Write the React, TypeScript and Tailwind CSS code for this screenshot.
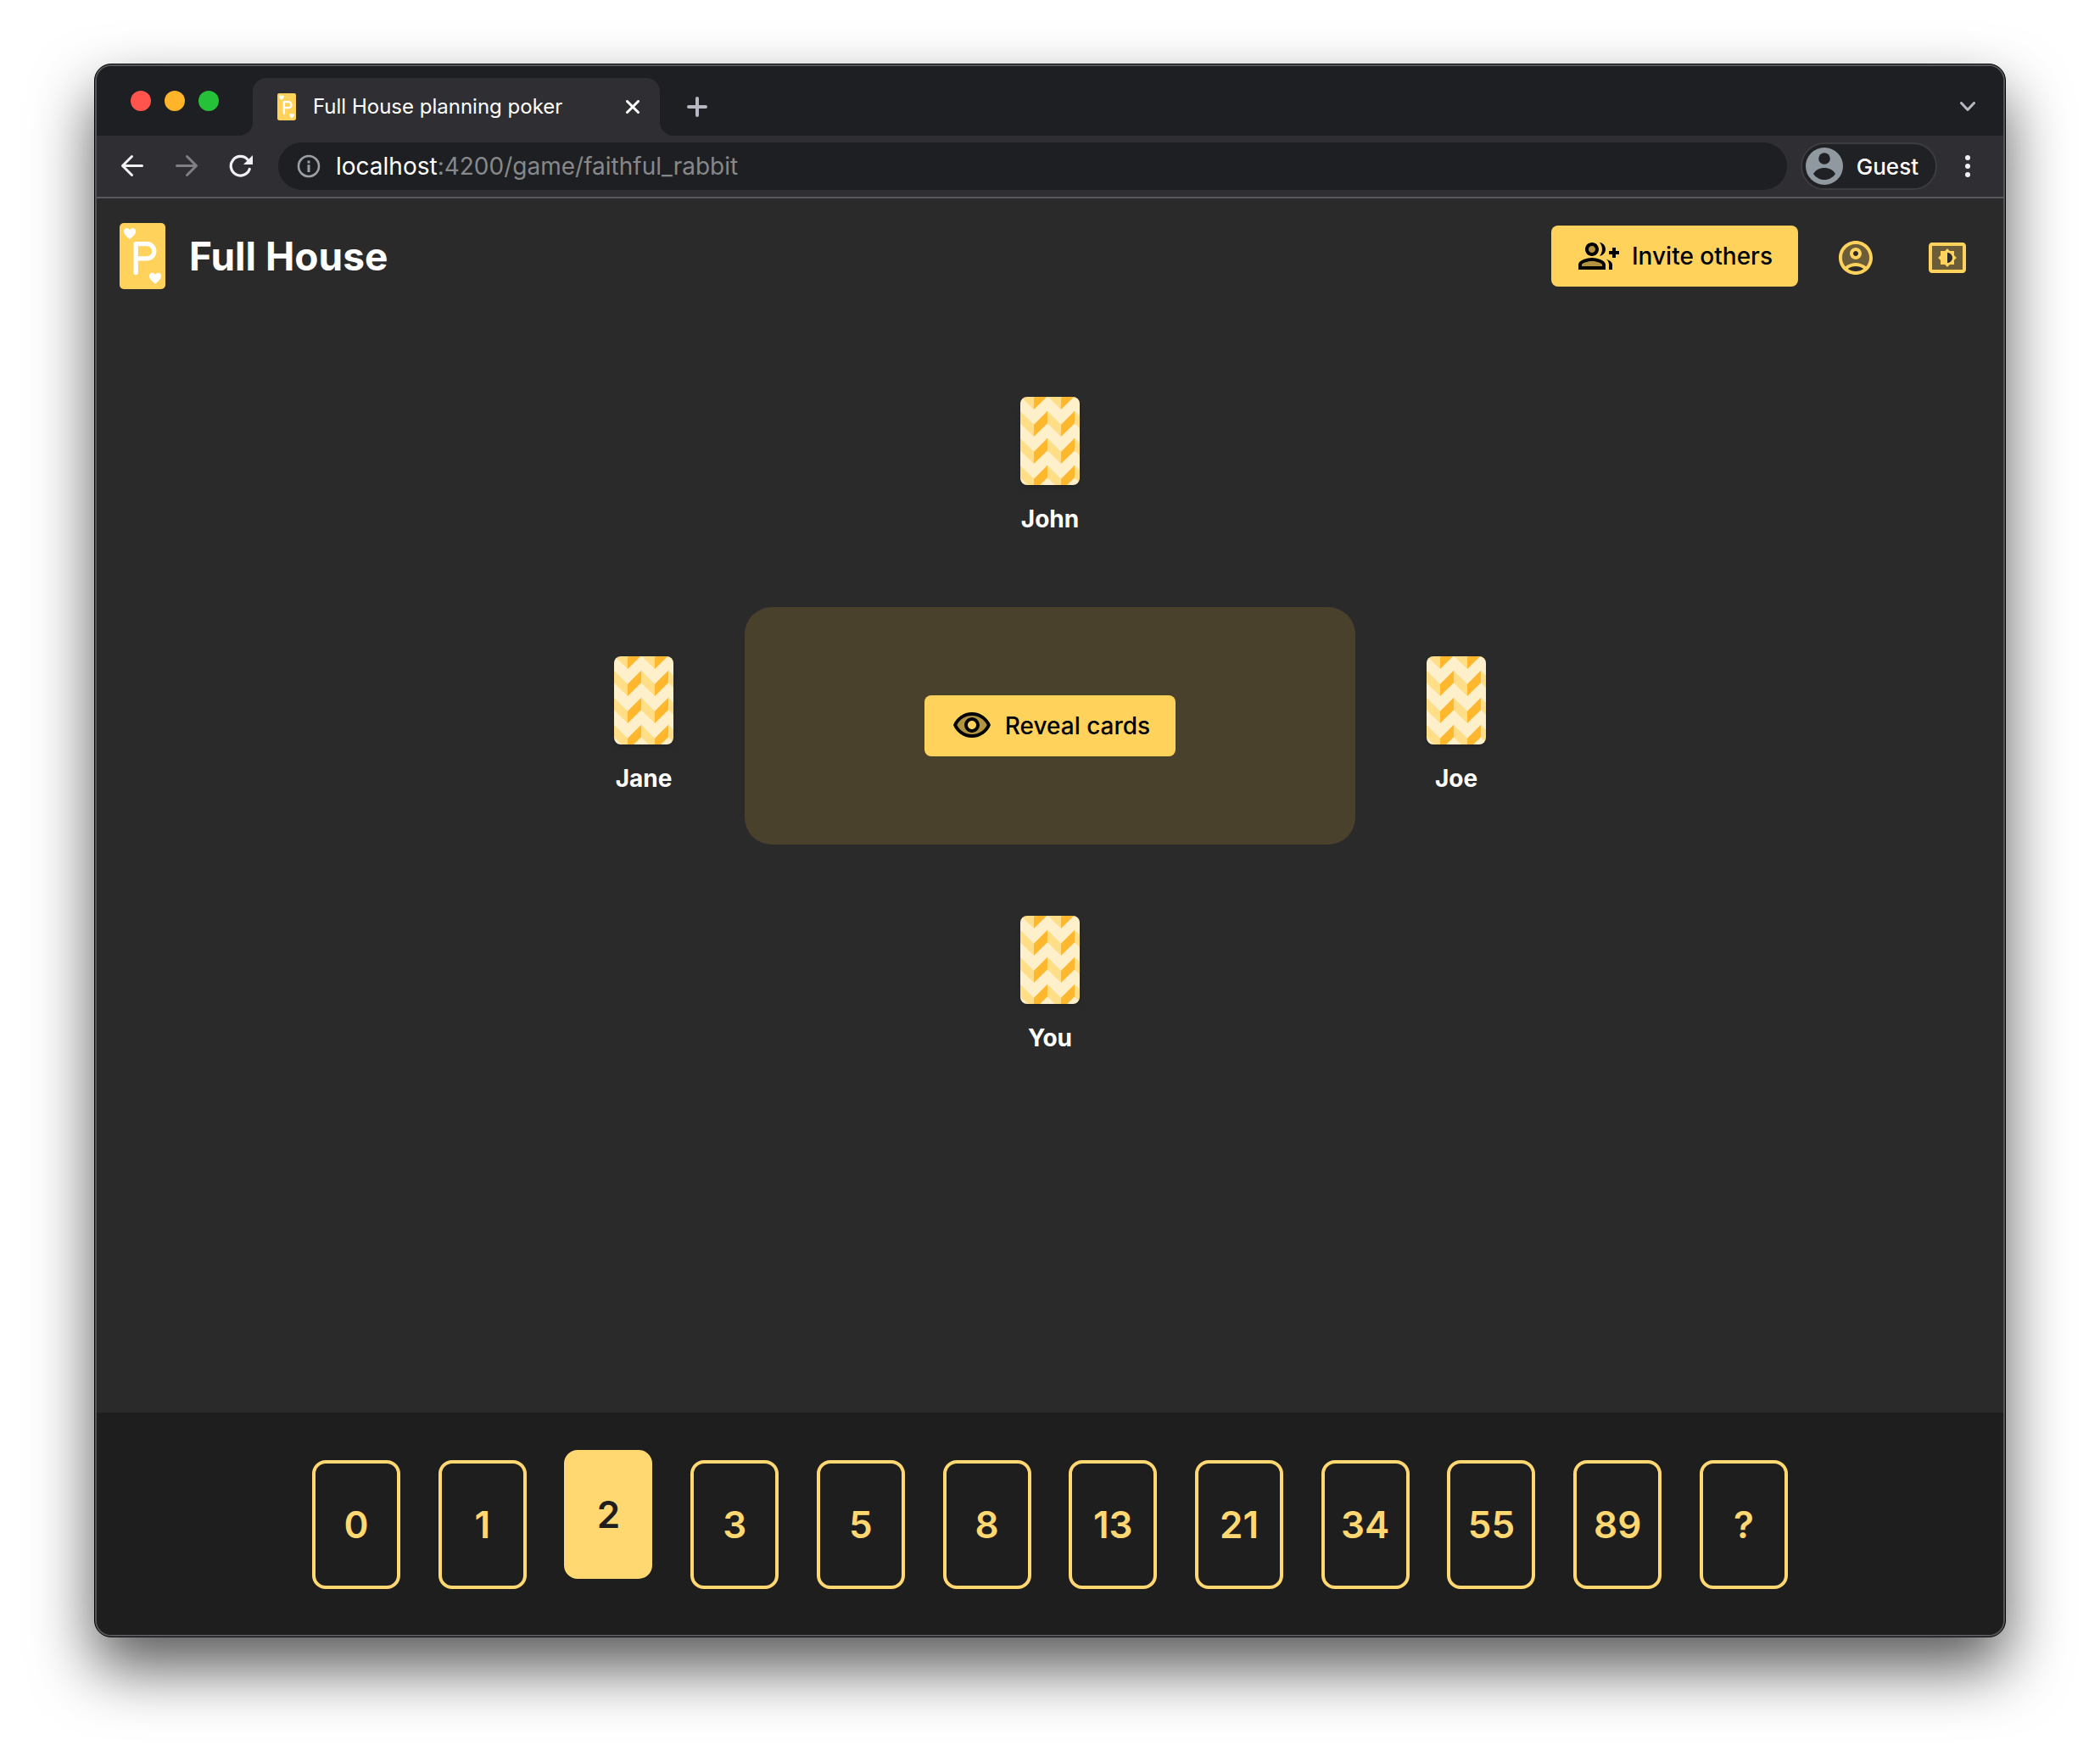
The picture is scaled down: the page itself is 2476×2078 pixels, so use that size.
import { useId, useState } from 'react';
import type { ReactNode } from 'react';

const CARD_VALUES = ['0', '1', '2', '3', '5', '8', '13', '21', '34', '55', '89', '?'];

function Heart({ x, y }: { x: number; y: number }) {
  return (
    <path
      transform={`translate(${x} ${y})`}
      d="M7 13.300C5.300 10.800 0 8.300 0 4 0 1.600 1.600 0 3.600 0 5.200 0 6.400 .9 7 2.400 7.600 .9 8.800 0 10.400 0 12.400 0 14 1.600 14 4c0 4.300-5.300 6.800-7 9.300z"
      fill="#fff"
    />
  );
}

function Logo({ className }: { className: string }) {
  return (
    <svg viewBox="0 0 54 78" className={className} aria-hidden="true">
      <rect width="54" height="78" rx="5" fill="#ffd35b" />
      <Heart x={5} y={6} />
      <Heart x={35} y={58.700} />
      <path d="M19.200 58.500V24.600h13a8.600 8.600 0 0 1 0 17.200h-13" fill="none" stroke="#fff" strokeWidth="5.300" strokeLinecap="round" strokeLinejoin="round" />
    </svg>
  );
}

function CardBack() {
  const patternId = useId();
  return (
    <svg viewBox="0 0 70 104" className="h-[104px] w-[70px] rounded-lg shadow-md" aria-hidden="true">
      <defs>
        <pattern id={patternId} width="32" height="32" y="16" patternUnits="userSpaceOnUse">
          <rect width="32" height="32" fill="#fff0cc" />
          <path d="M0 .7l16 16V31L0 15.300z" fill="#ffde87" />
          <path d="M32 .7l-16 16V31l16-15.700z" fill="#ffb72e" />
        </pattern>
      </defs>
      <rect width="70" height="104" fill={`url(#${patternId})`} />
    </svg>
  );
}

function Player({ name }: { name: string }) {
  return (
    <figure className="flex w-[70px] flex-col items-center gap-5">
      <CardBack />
      <figcaption className="text-[28px] leading-10 font-bold whitespace-nowrap">{name}</figcaption>
    </figure>
  );
}

function ActionButton({ icon, children }: { icon: ReactNode; children: ReactNode }) {
  return (
    <button type="button" className="flex h-[72px] items-center gap-[15px] rounded-lg bg-[#ffd35b] pr-[30px] pl-8 text-[28px] font-medium text-black">
      <svg viewBox="0 0 24 24" className="size-12" fill="currentColor" aria-hidden="true">
        {icon}
      </svg>
      {children}
    </button>
  );
}

function IconButton({ label, children }: { label: string; children: ReactNode }) {
  return (
    <button type="button" aria-label={label} className="flex size-20 items-center justify-center rounded-full text-[#ffd35b]">
      <svg viewBox="0 0 24 24" className="size-12" fill="currentColor" aria-hidden="true">
        {children}
      </svg>
    </button>
  );
}

function TabStrip() {
  return (
    <div className="flex h-[82px] items-end bg-[#1e1f22] pr-[30px] pl-10">
      <div className="flex h-full w-[144px] items-center gap-4">
        <button type="button" aria-label="Close window" className="size-6 rounded-full bg-[#ff544d]" />
        <button type="button" aria-label="Minimise window" className="size-6 rounded-full bg-[#ffb429]" />
        <button type="button" aria-label="Zoom window" className="size-6 rounded-full bg-[#25c138]" />
      </div>
      <div className="relative flex h-[68px] w-[480px] items-center rounded-t-2xl bg-[#2f2e33] pr-5 pl-[29px]">
        <svg viewBox="0 0 16 16" className="absolute bottom-0 -left-4 size-4" fill="#2f2e33" aria-hidden="true">
          <path d="M16 0v16H0A16 16 0 0 0 16 0z" />
        </svg>
        <Logo className="h-8 w-[22px]" />
        <span className="ml-5 grow text-[24px] text-white">Full House planning poker</span>
        <button type="button" aria-label="Close tab" className="flex size-6 items-center justify-center">
          <svg viewBox="0 0 16 16" className="size-4" stroke="#fff" strokeWidth="3" strokeLinecap="round" aria-hidden="true">
            <path d="M1.500 1.500l13 13M14.500 1.500l-13 13" />
          </svg>
        </button>
        <svg viewBox="0 0 16 16" className="absolute -right-4 bottom-0 size-4" fill="#2f2e33" aria-hidden="true">
          <path d="M0 0v16h16A16 16 0 0 1 0 0z" />
        </svg>
      </div>
      <button type="button" aria-label="New tab" className="ml-8 flex h-[68px] w-6 items-center justify-center">
        <svg viewBox="0 0 24 24" className="size-6" stroke="#b7b8c1" strokeWidth="4" strokeLinecap="round" aria-hidden="true">
          <path d="M12 2v20M2 12h20" />
        </svg>
      </button>
      <button type="button" aria-label="Search tabs" className="ml-auto flex h-[68px] w-6 items-center justify-center">
        <svg viewBox="0 0 18 12" className="h-3 w-[18px]" fill="none" stroke="#b7b8c1" strokeWidth="3" strokeLinecap="round" strokeLinejoin="round" aria-hidden="true">
          <path d="M1.500 1.500L9 9.500l7.500-8" />
        </svg>
      </button>
    </div>
  );
}

function Toolbar() {
  return (
    <div className="flex h-[74px] items-center border-b-2 border-[#57585b] bg-[#2f2e33] pr-[30px] pl-7">
      <div className="flex items-center gap-9">
        <button type="button" aria-label="Back" className="size-7">
          <svg viewBox="0 0 28 28" className="size-7" fill="none" stroke="#f1f1f3" strokeWidth="3" strokeLinecap="round" strokeLinejoin="round" aria-hidden="true">
            <path d="M13.500 2.500L2.500 13.500l11 11M2.500 13.500H25.500" />
          </svg>
        </button>
        <button type="button" aria-label="Forward" className="size-7">
          <svg viewBox="0 0 28 28" className="size-7" fill="none" stroke="#808083" strokeWidth="3" strokeLinecap="round" strokeLinejoin="round" aria-hidden="true">
            <path d="M14.500 2.500l11 11-11 11M25.500 13.500H2.500" />
          </svg>
        </button>
        <button type="button" aria-label="Reload" className="size-7">
          <svg viewBox="0 0 28 28" className="size-7" aria-hidden="true">
            <path d="M24.200 17.500A11.300 11.300 0 1 1 22 6.200" fill="none" stroke="#f1f1f3" strokeWidth="3.200" strokeLinecap="round" />
            <path d="M28 1v11H17z" fill="#f1f1f3" />
          </svg>
        </button>
      </div>
      <div className="ml-[30px] flex h-14 grow items-center gap-[18px] rounded-full bg-[#1e1f22] pl-[22px] text-[28px]">
        <svg viewBox="0 0 28 28" className="size-7" aria-hidden="true">
          <circle cx="14" cy="14" r="12" fill="none" stroke="#9aa0a6" strokeWidth="2.600" />
          <path d="M12.500 12.300h3V21h-3zM12.500 7.500h3v3h-3z" fill="#9aa0a6" />
        </svg>
        <a href="#game" className="text-[#87888a]">
          <span className="text-white">localhost</span>:4200/game/faithful_rabbit
        </a>
      </div>
      <button type="button" className="ml-4 flex h-14 items-center gap-4 rounded-full border-2 border-[#3c3c3e] bg-[#202124] pr-5 pl-1 text-[26px] font-medium text-white">
        <svg viewBox="0 0 44 44" className="size-11" aria-hidden="true">
          <circle cx="22" cy="22" r="22" fill="#9099a0" />
          <circle cx="22" cy="13" r="6.800" fill="#202124" />
          <path d="M9 31c2.500-4.500 7.500-7 13-7s10.500 2.500 13 7c-2.800 4.300-7.500 7-13 7s-10.200-2.700-13-7z" fill="#202124" />
        </svg>
        Guest
      </button>
      <button type="button" aria-label="Browser menu" className="ml-6 flex h-14 w-6 items-center justify-center">
        <svg viewBox="0 0 6 28" className="h-7 w-[6px]" fill="#f1f1f3" aria-hidden="true">
          <circle cx="3" cy="4" r="3" />
          <circle cx="3" cy="14" r="3" />
          <circle cx="3" cy="24" r="3" />
        </svg>
      </button>
    </div>
  );
}

function Header() {
  return (
    <header className="flex h-[136px] items-center gap-7 pr-[26px] pl-[27px]">
      <Logo className="h-[78px] w-[54px]" />
      <h1 className="grow text-[46px] font-bold">Full House</h1>
      <ActionButton
        icon={
          <>
            <path opacity=".3" d="M8 15c-2.700 0-5.800 1.290-6 2.010V18h12v-1c-.2-.71-3.300-2-6-2z" />
            <circle opacity=".3" cx="8" cy="8" r="2" />
            <path d="M22 9V7h-2v2h-2v2h2v2h2v-2h2V9h-2zM8 12c2.210 0 4-1.790 4-4s-1.790-4-4-4-4 1.790-4 4 1.790 4 4 4zm0-6c1.100 0 2 .9 2 2s-.9 2-2 2-2-.9-2-2 .9-2 2-2zm0 7c-2.670 0-8 1.340-8 4v3h16v-3c0-2.660-5.330-4-8-4zm6 5H2v-.99C2.200 16.290 5.300 15 8 15s5.800 1.290 6 2v1zM12.510 4.050C13.430 5.110 14 6.490 14 8s-.57 2.890-1.490 3.950C14.470 11.700 16 10.040 16 8s-1.530-3.700-3.490-3.950zM16.530 13.830C17.420 14.660 18 15.700 18 17v3h2v-3c0-1.450-1.590-2.510-3.470-3.170z" />
          </>
        }
      >
        Invite others
      </ActionButton>
      <nav className="flex gap-7 pt-1">
        <IconButton label="Profile">
          <path opacity=".3" d="M12 4c-4.420 0-8 3.580-8 8 0 1.950.7 3.730 1.860 5.120C7.550 15.800 9.680 15 12 15s4.450.8 6.140 2.120C19.300 15.730 20 13.950 20 12c0-4.420-3.580-8-8-8zm0 9c-1.930 0-3.500-1.570-3.500-3.500S10.070 6 12 6s3.500 1.570 3.500 3.500S13.930 13 12 13z" />
          <path d="M12 2C6.480 2 2 6.480 2 12s4.480 10 10 10 10-4.480 10-10S17.520 2 12 2zM7.350 18.500C8.660 17.560 10.260 17 12 17s3.340.56 4.650 1.500C15.340 19.440 13.740 20 12 20s-3.340-.56-4.650-1.500zm10.790-1.380C16.450 15.800 14.320 15 12 15s-4.450.8-6.140 2.120C4.700 15.730 4 13.950 4 12c0-4.420 3.580-8 8-8s8 3.580 8 8c0 1.950-.7 3.730-1.860 5.120z" />
          <path d="M12 6c-1.930 0-3.500 1.570-3.500 3.500S10.070 13 12 13s3.500-1.570 3.500-3.500S13.930 6 12 6zm0 5c-.83 0-1.500-.67-1.500-1.500S11.170 8 12 8s1.500.67 1.500 1.500S12.830 11 12 11z" />
        </IconButton>
        <IconButton label="Theme">
          <path opacity=".3" fillRule="evenodd" d="M3 19.010h18V4.990H3v14.020zM8 10.500V8h2.500L12 6.500 13.500 8H16v2.500l1.500 1.500-1.500 1.500V16h-2.500L12 17.500 10.500 16H8v-2.500L6.500 12 8 10.500z" />
          <path d="M21 3H3c-1.100 0-2 .9-2 2v14c0 1.100.9 2 2 2h18c1.100 0 2-.9 2-2V5c0-1.100-.9-2-2-2zm0 16.010H3V4.990h18v14.020zM8 16h2.500l1.500 1.500 1.500-1.500H16v-2.500l1.500-1.500-1.500-1.500V8h-2.500L12 6.500 10.500 8H8v2.500L6.500 12 8 13.500V16zm4-7c1.660 0 3 1.340 3 3s-1.340 3-3 3V9z" />
        </IconButton>
      </nav>
    </header>
  );
}

function GameTable() {
  return (
    <main className="flex grow flex-col items-center gap-[84px] pt-[98px]">
      <Player name="John" />
      <div className="flex items-center gap-[84px]">
        <Player name="Jane" />
        <section aria-label="Table" className="flex h-[280px] w-[720px] items-center justify-center rounded-4xl bg-[#4a412c]">
          <ActionButton
            icon={
              <>
                <path opacity=".3" fillRule="evenodd" d="M12 6c-3.790 0-7.170 2.130-8.820 5.500C4.830 14.870 8.210 17 12 17s7.170-2.130 8.820-5.500C19.170 8.130 15.790 6 12 6zm0 10c-2.480 0-4.500-2.020-4.500-4.500S9.520 7 12 7s4.500 2.020 4.500 4.500S14.480 16 12 16z" />
                <path d="M12 4C7 4 2.730 7.110 1 11.500 2.730 15.890 7 19 12 19s9.270-3.110 11-7.500C21.270 7.110 17 4 12 4zm0 13c-3.790 0-7.170-2.130-8.820-5.500C4.830 8.130 8.210 6 12 6s7.170 2.130 8.820 5.500C19.170 14.870 15.790 17 12 17zm0-10c-2.480 0-4.500 2.020-4.500 4.500S9.520 16 12 16s4.500-2.020 4.500-4.500S14.480 7 12 7zm0 7c-1.380 0-2.500-1.120-2.500-2.500S10.620 9 12 9s2.500 1.120 2.500 2.500S13.380 14 12 14z" />
              </>
            }
          >
            Reveal cards
          </ActionButton>
        </section>
        <Player name="Joe" />
      </div>
      <Player name="You" />
    </main>
  );
}

function Hand() {
  const [picked, setPicked] = useState('2');
  return (
    <footer className="bg-[#1e1e1e] px-8 pt-14 pb-[54px]">
      <div className="mx-auto flex max-w-[1740px] justify-between">
        {CARD_VALUES.map((value) => (
          <button
            key={value}
            type="button"
            aria-pressed={value === picked}
            onClick={() => setPicked(value)}
            className={
              value === picked
                ? 'h-[152px] w-[104px] -translate-y-3 rounded-2xl border-4 border-[#ffd871] bg-[#ffd871] text-[44px] font-semibold text-[#1e1e1e]'
                : 'h-[152px] w-[104px] rounded-2xl border-4 border-[#ffd871] text-[44px] font-semibold text-[#ffd871]'
            }
          >
            {value}
          </button>
        ))}
      </div>
    </footer>
  );
}

export default function App() {
  return (
    <div className="flex min-h-screen flex-col bg-white px-[111px] pt-[75px] pb-[147px] font-[Inter,sans-serif]">
      <div className="flex grow flex-col overflow-hidden rounded-[20px] border border-black bg-[#2a2a2a] shadow-[0_36px_72px_rgba(0,0,0,0.65)]">
        <div className="flex grow flex-col overflow-hidden rounded-[19px] border-2 border-[#55575a] text-white">
          <TabStrip />
          <Toolbar />
          <Header />
          <GameTable />
          <Hand />
        </div>
      </div>
    </div>
  );
}
